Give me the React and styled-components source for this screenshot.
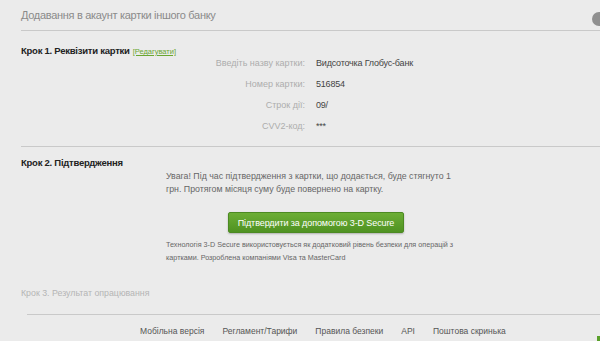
import React from 'react';
import styled, { createGlobalStyle } from 'styled-components';

const Global = createGlobalStyle`
  html, body {
    margin: 0;
    padding: 0;
    background: #ebebeb;
    overflow: hidden;
  }
  body {
    font-family: "Liberation Sans", Arial, sans-serif;
  }
`;

const Page = styled.div`
  width: 600px;
  height: 341px;
  position: relative;
  overflow: hidden;
  background: #ebebeb;
`;

const Content = styled.div`
  padding-left: 21px;
`;

const Header = styled.div`
  display: flex;
  align-items: center;
  justify-content: space-between;
  height: 30px;
  border-bottom: 1px solid #c9c9c9;
  margin-right: -6px;
`;

const Title = styled.h1`
  margin: 0;
  font-size: 11px;
  font-weight: normal;
  color: #8a8a8a;
  letter-spacing: -0.3px;
`;

const HelpIcon = styled.span`
  width: 14px;
  height: 14px;
  border-radius: 50%;
  background: #8f8f8f;
  margin-top: 8px;
`;

const Section = styled.section`
  padding: ${p => p.$pad || '0'};
  border-bottom: ${p => (p.$divider ? '1px solid #c9c9c9' : 'none')};
`;

const StepTitle = styled.div`
  display: flex;
  align-items: baseline;
  gap: 3px;
  height: 12px;
  line-height: 12px;
  font-size: ${p => (p.$muted ? '8.8px' : '9.5px')};
  font-weight: ${p => (p.$muted ? 'normal' : 'bold')};
  color: ${p => (p.$muted ? '#b5b5b5' : '#222')};
  letter-spacing: ${p => (p.$muted ? '0' : '-0.25px')};
`;

const EditLink = styled.a`
  font-size: 7.5px;
  color: #6aa632;
  text-decoration: underline;
  font-weight: normal;
  letter-spacing: 0;
`;

const Form = styled.div`
  display: grid;
  grid-template-columns: 284px 1fr;
  column-gap: 11px;
  grid-auto-rows: 21px;
  align-items: center;
  margin-top: -5px;
`;

const Label = styled.div`
  text-align: right;
  font-size: 9px;
  color: #adadad;
`;

const Value = styled.div`
  font-size: 9px;
  letter-spacing: -0.2px;
  color: #444;
`;

const StepBody = styled.div`
  padding-left: 145px;
`;

const Notice = styled.p`
  margin: 1px 0 0;
  width: 292px;
  font-size: 8.8px;
  line-height: 13px;
  color: #666;
`;

const ButtonRow = styled.div`
  display: flex;
  padding-left: 62px;
  margin-top: 16px;
`;

const Button = styled.button`
  width: 176px;
  height: 21px;
  border: 1px solid #4c8a22;
  border-radius: 2px;
  background: linear-gradient(#6cae35, #4f9222);
  color: #fff;
  font-family: inherit;
  font-size: 9px;
  letter-spacing: -0.1px;
  white-space: nowrap;
  padding: 0;
  box-shadow: 0 1px 2px rgba(0, 0, 0, 0.25);
`;

const Note = styled.p`
  margin: 5px 0 0;
  width: 300px;
  font-size: 7.2px;
  line-height: 13px;
  color: #666;
`;

const Footer = styled.footer`
  margin: 15px 0 0 27px;
  border-top: 1px solid #c9c9c9;
  display: flex;
  gap: 18px;
  padding: 11px 0 0 113px;
`;

const FooterLink = styled.a`
  font-size: 8.5px;
  color: #555;
  text-decoration: none;
`;

const Corner = styled.span`
  position: absolute;
  right: 0;
  bottom: 0;
  width: 3px;
  height: 5px;
  background: #5aa02a;
`;

const rows = [
  ['Введіть назву картки:', 'Видсоточка Глобус-банк'],
  ['Номер картки:', '516854'],
  ['Строк дії:', '09/'],
  ['CVV2-код:', '***'],
];

const links = ['Мобільна версія', 'Регламент/Тарифи', 'Правила безпеки', 'API', 'Поштова скринька'];

export default function App() {
  return (
    <Page>
      <Global />
      <Content>
        <Header>
          <Title>Додавання в акаунт картки іншого банку</Title>
          <HelpIcon />
        </Header>

        <Section $divider $pad="14px 0 10px">
          <StepTitle>
            Крок 1. Реквізити картки <EditLink>[Редагувати]</EditLink>
          </StepTitle>
          <Form>
            {rows.map(([l, v]) => (
              <React.Fragment key={l}>
                <Label>{l}</Label>
                <Value>{v}</Value>
              </React.Fragment>
            ))}
          </Form>
        </Section>

        <Section $pad="10px 0 0">
          <StepTitle>Крок 2. Підтвердження</StepTitle>
          <StepBody>
            <Notice>
              Увага! Під час підтвердження з картки, що додається, буде стягнуто 1 грн. Протягом місяця суму буде
              повернено на картку.
            </Notice>
            <ButtonRow>
              <Button>Підтвердити за допомогою 3-D Secure</Button>
            </ButtonRow>
            <Note>
              Технологія 3-D Secure використовується як додатковий рівень безпеки для операцій з картками.
              Розроблена компаніями Visa та MasterCard
            </Note>
          </StepBody>
        </Section>

        <Section $pad="23px 0 0">
          <StepTitle $muted>Крок 3. Результат опрацювання</StepTitle>
        </Section>
      </Content>

      <Footer>
        {links.map(l => (
          <FooterLink key={l}>{l}</FooterLink>
        ))}
      </Footer>
      <Corner />
    </Page>
  );
}
